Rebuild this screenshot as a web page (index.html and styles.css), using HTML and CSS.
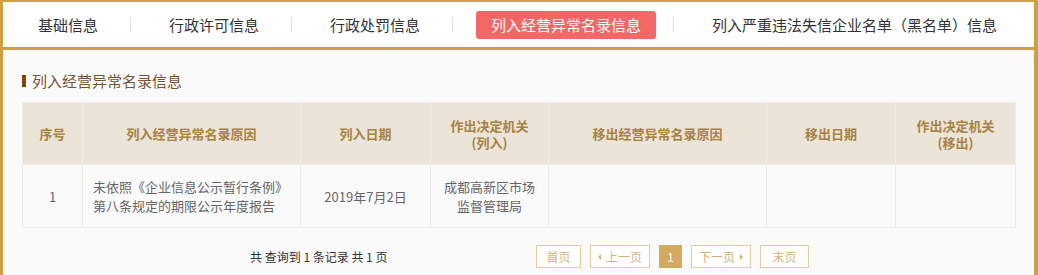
FILE: index.html
```html
<!DOCTYPE html>
<html lang="zh-CN">
<head>
    <meta charset="UTF-8">
    <meta name="viewport" content="width=device-width, initial-scale=1.0">
    <title>列入经营异常名录信息</title>
    <link rel="stylesheet" href="styles.css">
</head>
<body>

    <div class="frame">
        <div class="tabs">
            <a class="tab">基础信息</a>
            <span class="tab-sep"></span>
            <a class="tab">行政许可信息</a>
            <span class="tab-sep"></span>
            <a class="tab">行政处罚信息</a>
            <span class="tab-sep"></span>
            <a class="tab active">列入经营异常名录信息</a>
            <span class="tab-sep"></span>
            <a class="tab">列入严重违法失信企业名单（黑名单）信息</a>
        </div>

        <div class="panel">
            <h2 class="panel-title">列入经营异常名录信息</h2>

            <table class="info-table">
                <colgroup>
                    <col style="width: 60px;">
                    <col style="width: 218px;">
                    <col style="width: 130px;">
                    <col style="width: 118px;">
                    <col style="width: 218px;">
                    <col style="width: 129px;">
                    <col style="width: 120px;">
                </colgroup>
                <thead>
                    <tr>
                        <th>序号</th>
                        <th>列入经营异常名录原因</th>
                        <th>列入日期</th>
                        <th>作出决定机关<br>(列入)</th>
                        <th>移出经营异常名录原因</th>
                        <th>移出日期</th>
                        <th>作出决定机关<br>(移出)</th>
                    </tr>
                </thead>
                <tbody>
                    <tr>
                        <td>1</td>
                        <td class="left">未依照《企业信息公示暂行条例》<br>第八条规定的期限公示年度报告</td>
                        <td>2019年7月2日</td>
                        <td>成都高新区市场<br>监督管理局</td>
                        <td></td>
                        <td></td>
                        <td></td>
                    </tr>
                </tbody>
            </table>

            <div class="pager">
                <span class="pager-info">共 查询到 1 条记录 共 1 页</span>
                <div class="pager-links">
                    <a class="page-btn first">首页</a>
                    <a class="page-btn wide"><i class="arrow-left"></i>上一页</a>
                    <a class="page-btn num current">1</a>
                    <a class="page-btn wide">下一页<i class="arrow-right"></i></a>
                    <a class="page-btn last">末页</a>
                </div>
            </div>
        </div>
    </div>

</body>
</html>
```

FILE: styles.css
```css
body {
    margin: 0;
    font-family: "Noto Sans CJK SC", "Liberation Sans", sans-serif;
    background: #fafafa;
}
.frame {
    border-top: 2px solid #cfa03f;
    border-left: 3px solid #cfa03f;
    border-right: 4px solid #cfa03f;
    background: #fafafa;
}
.tabs {
    display: flex;
    align-items: center;
    height: 45px;
    padding-left: 20px;
    background: #fff;
    border-bottom: 3px solid #cfa03f;
}
.tab {
    padding: 0 15px;
    height: 28px;
    line-height: 28px;
    font-size: 15px;
    color: #333;
    white-space: nowrap;
    border-radius: 3px;
    cursor: pointer;
}
.tab.active {
    background: #f56767;
    color: #fff;
}
.tab-sep {
    width: 1px;
    height: 15px;
    margin: 0 23px 0 17px;
    background: #dcdcdc;
}
.panel {
    height: 204px;
    padding: 21px 19px 0;
}
.panel-title {
    display: flex;
    align-items: center;
    margin: 0;
    font-size: 15px;
    font-weight: normal;
    line-height: 20px;
    color: #775434;
}
.panel-title::before {
    content: "";
    width: 4px;
    height: 12px;
    margin-right: 6px;
    background: #844309;
}
.info-table {
    width: 993px;
    margin-top: 11px;
    table-layout: fixed;
    border-collapse: collapse;
}
.info-table th,
.info-table td {
    padding: 0;
    border: 1px solid #efebe5;
    text-align: center;
    vertical-align: middle;
}
.info-table th {
    height: 61px;
    background: #ebe4d9;
    font-size: 13px;
    font-weight: bold;
    line-height: 17px;
    color: #a8823f;
}
.info-table td {
    height: 62px;
    background: #fafafa;
    font-size: 13px;
    line-height: 19px;
    color: #666;
}
.info-table td.left {
    text-align: left;
    padding-left: 10px;
}
.pager {
    display: flex;
    align-items: center;
    margin-top: 17px;
}
.pager-info {
    width: 286px;
    margin-left: 228px;
    font-size: 12px;
    color: #333;
}
.pager-links {
    display: flex;
    gap: 9px;
}
.page-btn {
    display: flex;
    align-items: center;
    justify-content: center;
    box-sizing: border-box;
    height: 23px;
    border: 1px solid #e5cb9d;
    font-size: 12px;
    color: #d3b27a;
    background: #fff;
    cursor: pointer;
}
.page-btn.first {
    width: 45px;
}
.page-btn.wide {
    width: 60px;
}
.page-btn.num {
    width: 23px;
}
.page-btn.last {
    width: 49px;
}
.page-btn.current {
    background: #d3a95d;
    border-color: #d3a95d;
    color: #fff;
}
.arrow-left,
.arrow-right {
    width: 0;
    height: 0;
    border-top: 3px solid transparent;
    border-bottom: 3px solid transparent;
}
.arrow-left {
    border-right: 3px solid #d3b27a;
    margin-right: 5px;
}
.arrow-right {
    border-left: 3px solid #d3b27a;
    margin-left: 5px;
}
```
